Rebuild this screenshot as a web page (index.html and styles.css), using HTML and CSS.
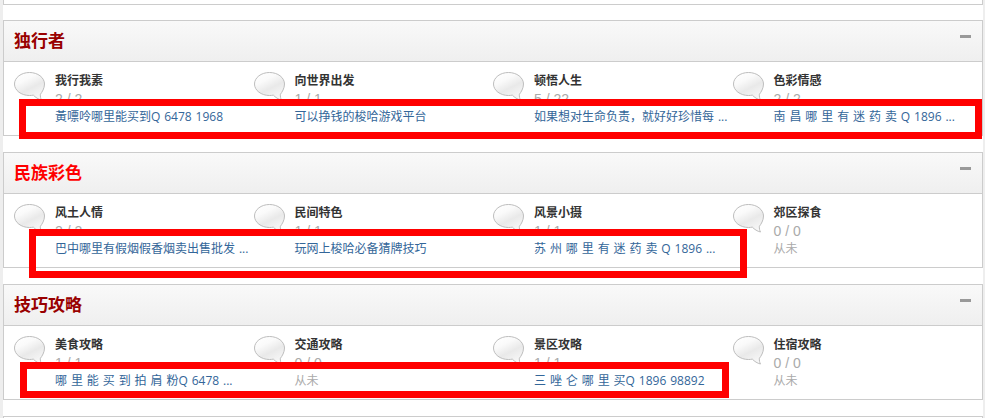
FILE: index.html
```html
<!DOCTYPE html>
<html lang="zh-CN">
<head>
  <meta charset="UTF-8" />
  <title>论坛版块</title>
  <link rel="stylesheet" href="styles.css">
</head>
<body>
  <svg class="defs" width="0" height="0">
    <defs>
      <linearGradient id="bubbleFill" x1="0.15" y1="0" x2="0.7" y2="1">
        <stop offset="0" stop-color="#ffffff" />
        <stop offset="0.3" stop-color="#fafafa" />
        <stop offset="0.6" stop-color="#e9e9e9" />
        <stop offset="1" stop-color="#f8f8f8" />
      </linearGradient>
      <symbol id="bubble" viewBox="0 0 31 29">
        <path d="M15.500 .5C7.200 .5 .5 5.600 .5 12c0 6.400 6.700 11.500 15 11.500 1.300 0 2.600-.1 3.800-.4 2.200 2.300 5 4.200 8.200 4.900-.9-1.600-1.300-3.500-1.100-5.700C28 20.200 30.500 16.400 30.500 12 30.500 5.600 23.800 .5 15.500 .5z" fill="url(#bubbleFill)" stroke="#bdbdbd" />
      </symbol>
    </defs>
  </svg>

  <div class="panel panel-top"></div>

  <section class="panel">
    <header class="panel-head">
      <h2 class="title title-dark">独行者</h2>
      <span class="collapse"></span>
    </header>
    <div class="forums">
      <div class="forum">
        <svg class="bubble"><use href="#bubble" /></svg>
        <div class="info">
          <h3>我行我素</h3>
          <p class="count">2 / 2</p>
          <a href="#">黃嘌呤哪里能买到Q 6478 1968</a>
        </div>
      </div>
      <div class="forum">
        <svg class="bubble"><use href="#bubble" /></svg>
        <div class="info">
          <h3>向世界出发</h3>
          <p class="count">1 / 1</p>
          <a href="#">可以挣钱的梭哈游戏平台</a>
        </div>
      </div>
      <div class="forum">
        <svg class="bubble"><use href="#bubble" /></svg>
        <div class="info">
          <h3>顿悟人生</h3>
          <p class="count">5 / 22</p>
          <a href="#">如果想对生命负责，就好好珍惜每 ...</a>
        </div>
      </div>
      <div class="forum">
        <svg class="bubble"><use href="#bubble" /></svg>
        <div class="info">
          <h3>色彩情感</h3>
          <p class="count">2 / 2</p>
          <a href="#">南 昌 哪 里 有 迷 药 卖 Q 1896 ...</a>
        </div>
      </div>
    </div>
  </section>

  <section class="panel">
    <header class="panel-head">
      <h2 class="title title-red">民族彩色</h2>
      <span class="collapse"></span>
    </header>
    <div class="forums">
      <div class="forum">
        <svg class="bubble"><use href="#bubble" /></svg>
        <div class="info">
          <h3>风土人情</h3>
          <p class="count">2 / 2</p>
          <a href="#">巴中哪里有假烟假香烟卖出售批发 ...</a>
        </div>
      </div>
      <div class="forum">
        <svg class="bubble"><use href="#bubble" /></svg>
        <div class="info">
          <h3>民间特色</h3>
          <p class="count">1 / 1</p>
          <a href="#">玩网上梭哈必备猜牌技巧</a>
        </div>
      </div>
      <div class="forum">
        <svg class="bubble"><use href="#bubble" /></svg>
        <div class="info">
          <h3>风景小摄</h3>
          <p class="count">1 / 1</p>
          <a href="#">苏 州 哪 里 有 迷 药 卖 Q 1896 ...</a>
        </div>
      </div>
      <div class="forum">
        <svg class="bubble"><use href="#bubble" /></svg>
        <div class="info">
          <h3>郊区探食</h3>
          <p class="count">0 / 0</p>
          <span class="never">从未</span>
        </div>
      </div>
    </div>
  </section>

  <section class="panel">
    <header class="panel-head">
      <h2 class="title title-dark">技巧攻略</h2>
      <span class="collapse"></span>
    </header>
    <div class="forums">
      <div class="forum">
        <svg class="bubble"><use href="#bubble" /></svg>
        <div class="info">
          <h3>美食攻略</h3>
          <p class="count">1 / 1</p>
          <a href="#">哪 里 能 买 到 拍 肩 粉Q 6478 ...</a>
        </div>
      </div>
      <div class="forum">
        <svg class="bubble"><use href="#bubble" /></svg>
        <div class="info">
          <h3>交通攻略</h3>
          <p class="count">0 / 0</p>
          <span class="never">从未</span>
        </div>
      </div>
      <div class="forum">
        <svg class="bubble"><use href="#bubble" /></svg>
        <div class="info">
          <h3>景区攻略</h3>
          <p class="count">1 / 1</p>
          <a href="#">三 唑 仑 哪 里 买Q 1896 98892</a>
        </div>
      </div>
      <div class="forum">
        <svg class="bubble"><use href="#bubble" /></svg>
        <div class="info">
          <h3>住宿攻略</h3>
          <p class="count">0 / 0</p>
          <span class="never">从未</span>
        </div>
      </div>
    </div>
  </section>

  <div class="panel panel-bottom"></div>

  <div class="mark mark-1"></div>
  <div class="mark mark-2"></div>
  <div class="mark mark-3"></div>
</body>
</html>
```

FILE: styles.css
```css
body {
  position: relative;
  height: 418px;
  margin: 0;
  overflow: hidden;
  font-family: "Open Sans", "Noto Sans CJK SC", sans-serif;
  font-size: 12px;
  background: #fff;
  border-left: 3px solid #eee;
  border-right: 2px solid #eee;
  box-sizing: border-box;
}

.defs {
  position: absolute;
}

.panel {
  height: 116px;
  margin-bottom: 16px;
  background: #fff;
  border: 1px solid #ccc;
  box-sizing: border-box;
}

.panel-top {
  height: 5px;
  border-top: 0;
  margin-bottom: 15px;
}

.panel-bottom {
  height: 10px;
  margin-bottom: 0;
  border-bottom: 0;
}

.panel-head {
  display: flex;
  justify-content: space-between;
  height: 41px;
  padding: 0 11px 0 10px;
  background: linear-gradient(#f9f9f9, #efefef);
  border-bottom: 1px solid #ccc;
  box-sizing: border-box;
}

.title {
  margin: 0;
  font-size: 17px;
  line-height: 40px;
  font-weight: bold;
}

.title-dark {
  color: #900;
}

.title-red {
  color: #f00;
}

.collapse {
  width: 11px;
  height: 3px;
  margin-top: 14px;
  background: #999;
}

.forums {
  display: grid;
  grid-template-columns: repeat(4, 239.5px);
  padding: 10px 0 0 10px;
}

.forum {
  display: flex;
  gap: 10px;
}

.bubble {
  flex: none;
  width: 31px;
  height: 29px;
}

.info {
  display: flex;
  flex-direction: column;
  align-items: flex-start;
}

.info h3 {
  margin: 0;
  height: 18px;
  line-height: 18px;
  font-size: 12px;
  font-weight: bold;
  color: #333;
}

.count {
  margin: 0;
  height: 18px;
  line-height: 18px;
  font-family: "Liberation Sans", sans-serif;
  font-size: 14px;
  color: #aaa;
}

.info a,
.never {
  height: 18px;
  line-height: 18px;
  font-size: 12px;
  white-space: nowrap;
  word-spacing: 0.8px;
}

.info a {
  color: #369;
  text-decoration: none;
}

.never {
  color: #aaa;
}

.mark {
  position: absolute;
  border: 7px solid #f00;
  box-sizing: border-box;
}

.mark-1 {
  left: 16px;
  top: 99px;
  width: 963px;
  height: 40px;
}

.mark-2 {
  left: 26px;
  top: 229px;
  width: 718px;
  height: 49px;
}

.mark-3 {
  left: 17px;
  top: 362px;
  width: 709px;
  height: 36px;
}
```
